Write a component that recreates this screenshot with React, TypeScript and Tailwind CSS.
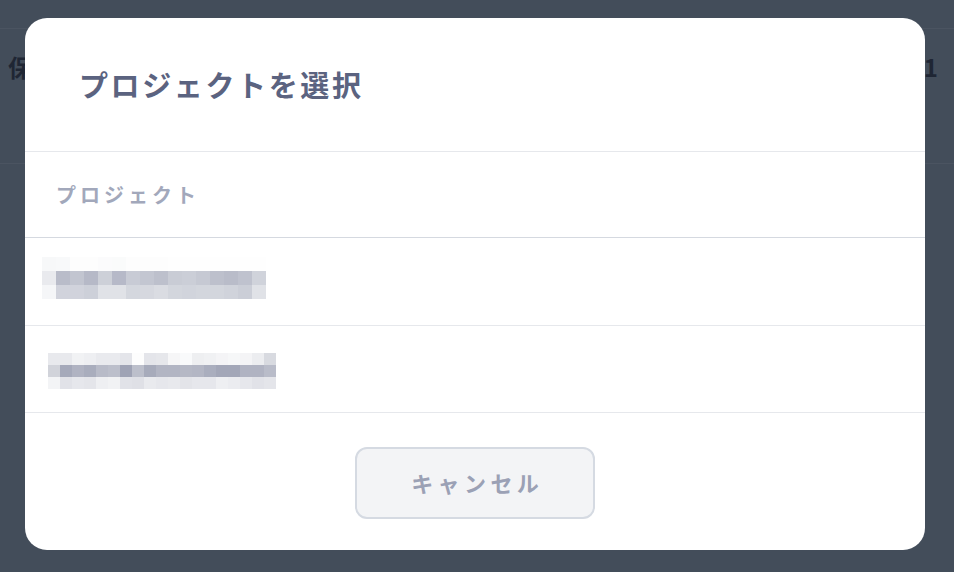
const row1: string[][] = [
  ['#f7f8f9', '#f8f9fa', '#fdfdfd', '#fdfdfd', '#fbfbfc', '#fafbfb', '#fdfdfd', '#fdfdfd', '#fdfdfd', '#fefefe', '#fefefe', '#fefefe', '#fefefe', '#fefefe', '#fefefe', '#fefefe'],
  ['#e9eaee', '#b9bcc9', '#c2c5d0', '#b6b9c7', '#cdd0d8', '#b6b9c8', '#c8cbd5', '#c3c6d1', '#bdc0cc', '#c9ccd5', '#cbced7', '#c6c9d3', '#bdc0cc', '#b9bcc9', '#bfc2ce', '#d0d3db'],
  ['#f5f6f8', '#d1d3dc', '#d1d3dc', '#cdd0d9', '#e0e2e7', '#e0e2e7', '#d4d7de', '#d6d8df', '#dadce2', '#d3d6dd', '#d1d4dc', '#d3d6dd', '#d3d6dd', '#d0d3db', '#cbced7', '#e0e2e7'],
];

const row2: string[][] = [
  ['#e8e9ed', '#e8e9ed', '#f1f2f4', '#eeeff2', '#e9eaee', '#e9eaee', '#e4e5ea', '#fdfdfd', '#e4e5ea', '#e6e7eb', '#f6f6f7', '#f9fafb', '#eeeff1', '#f0f1f3', '#f4f4f6', '#f6f7f8', '#f4f4f6', '#ecedf0', '#d8dae0'],
  ['#d1d3da', '#a5a9ba', '#b0b3c2', '#a9adbd', '#b8bbc8', '#bcbfcb', '#9fa3b5', '#bcbfcb', '#a7abbb', '#b2b5c3', '#b2b5c3', '#b5b8c5', '#b3b6c4', '#aaaebe', '#a3a7b8', '#a3a7b8', '#b0b3c2', '#b0b3c2', '#b9bcc9'],
  ['#f3f4f6', '#e1e2e8', '#e6e7ec', '#e4e5ea', '#eeeff2', '#f1f2f4', '#e1e2e8', '#dfe0e6', '#e9eaee', '#e6e7ec', '#e8e9ed', '#e3e4e9', '#e6e7ec', '#e6e7ec', '#eeeff2', '#ebecf0', '#e6e7ec', '#e1e2e8', '#e4e5ea'],
];

// pixelated (masked) project name
function Mosaic({ cells, size }: { cells: string[][]; size: number }) {
  const cols = cells[0].length;
  return (
    <svg width={cols * size} height={cells.length * size} shapeRendering="crispEdges">
      {cells.map((r, y) =>
        r.map((c, x) => <rect key={`${x}-${y}`} x={x * size} y={y * size} width={size} height={size} fill={c} />)
      )}
    </svg>
  );
}

export default function App() {
  return (
    <div
      className="relative h-[572px] w-full overflow-hidden bg-[#434d5a]"
      style={{ fontFamily: '"Noto Sans CJK JP", "Noto Sans", sans-serif' }}
    >
      {/* page behind the overlay */}
      <div className="h-[29px] border-b border-[#4b5461]" />
      <div className="flex h-[135px] items-start justify-between border-b border-[#4b5461] pl-2 pr-[16px] pt-[20px] text-[24px] font-bold text-[#1f2634]">
        <span>保存</span>
        <span>1</span>
      </div>

      {/* modal */}
      <div className="absolute left-[25px] top-[18px] flex h-[532px] w-[900px] flex-col overflow-hidden rounded-[22px] bg-white">
        <div className="flex h-[134px] items-center border-b border-[#e6e8ec] pl-[54px]">
          <h2 className="text-[29px] font-bold tracking-[0.09em] text-[#5b6380]">プロジェクトを選択</h2>
        </div>

        <div className="flex h-[86px] items-center border-b border-[#d5d9e0] pl-[31px]">
          <span className="text-[20px] font-bold tracking-[0.2em] text-[#a2a8bb]">プロジェクト</span>
        </div>

        <div className="h-[88px] border-b border-[#e6e8ec] pl-[17px] pt-[19px]">
          <Mosaic cells={row1} size={14} />
        </div>

        <div className="h-[87px] border-b border-[#e6e8ec] pl-[23px] pt-[27px]">
          <Mosaic cells={row2} size={12} />
        </div>

        <div className="flex flex-1 items-center justify-center pt-[2px]">
          <button className="flex h-[72px] w-[240px] items-center justify-center rounded-[12px] border-2 border-[#d5dae2] bg-[#f3f4f6] text-[22px] font-bold tracking-[0.2em] text-[#9ba1b5]">
            <span className="pl-[0.2em]">キャンセル</span>
          </button>
        </div>
      </div>
    </div>
  );
}
